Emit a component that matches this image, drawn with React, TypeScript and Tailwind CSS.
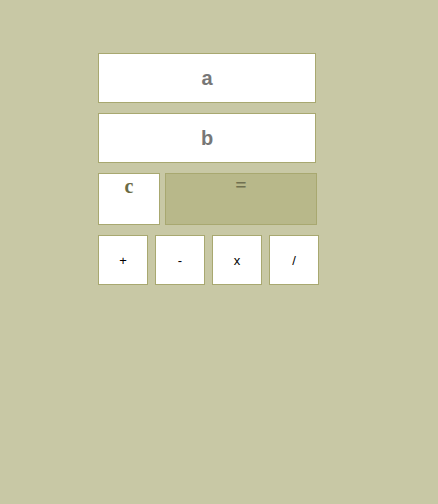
export default function App() {
  const box = "border border-[#a8a870] bg-white";
  return (
    <div className="min-h-[504px] w-full bg-[#c8c8a5] pt-[53px] pl-[98px]" style={{ fontFamily: '"Liberation Sans", Arial, sans-serif' }}>
      <div className="flex flex-col gap-[10px]">
        <div className={`${box} flex h-[50px] w-[218px] items-center justify-center text-[20px] font-bold text-[#777777]`}>a</div>
        <div className={`${box} flex h-[50px] w-[218px] items-center justify-center text-[20px] font-bold text-[#777777]`}>b</div>
        <div className="flex gap-[5px]">
          <div className={`${box} flex h-[52px] w-[62px] justify-center pt-[1px] text-[20px] font-bold leading-[22px] text-[#6b6b45]`} style={{ fontFamily: '"Liberation Serif", serif' }}>c</div>
          <div className="flex h-[52px] w-[152px] justify-center border border-[#a8a870] bg-[#b8b88a] text-[20px] font-bold leading-[22px] text-[#707050]" style={{ fontFamily: '"Liberation Serif", serif' }}>=</div>
        </div>
        <div className="flex gap-[7px]">
          {["+", "-", "x", "/"].map((s) => (
            <div key={s} className={`${box} flex h-[50px] w-[50px] items-center justify-center pt-[2px] text-[13px] text-black`}>{s}</div>
          ))}
        </div>
      </div>
    </div>
  );
}
